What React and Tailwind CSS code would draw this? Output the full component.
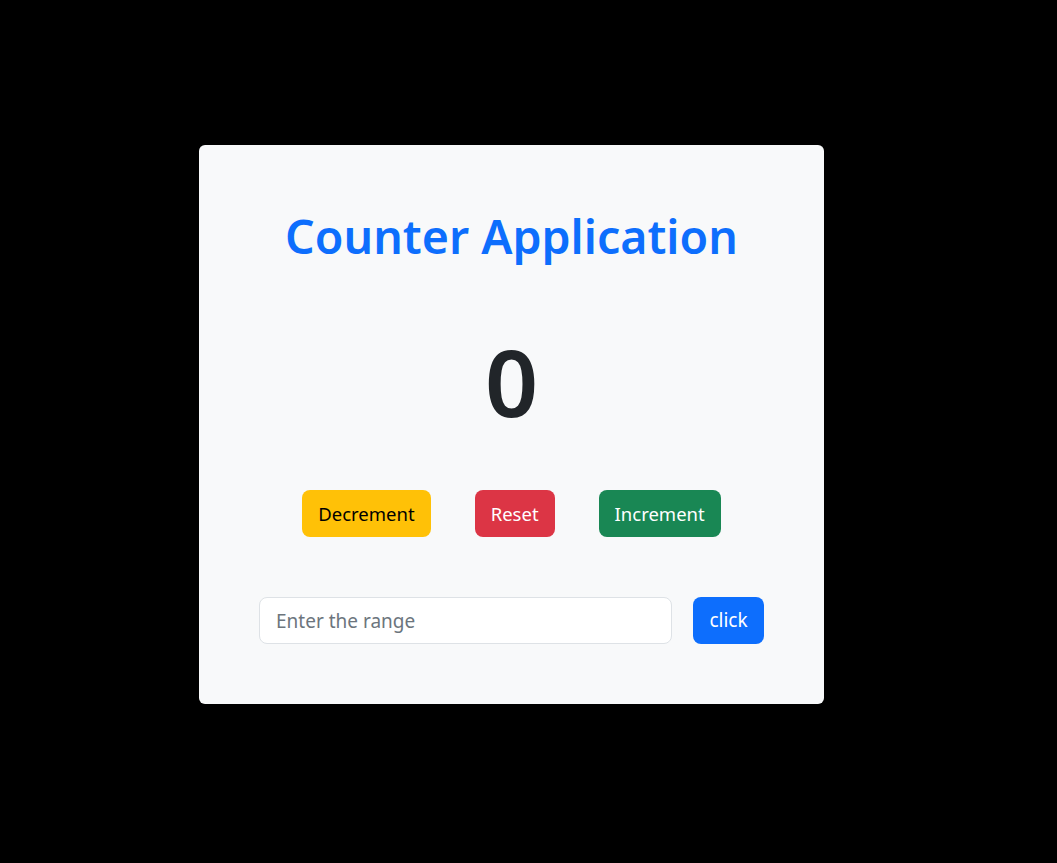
import React, { useState } from "react";

function App() {
  const [count, setCount] = useState(0);
  const [range, setRange] = useState("");

  const applyRange = () => {
    const n = parseInt(range, 10);
    if (!isNaN(n)) setCount(n);
  };

  return (
    <div
      className="min-h-screen bg-black pt-[145px] pl-[199px]"
      style={{ fontFamily: '"Noto Sans", "Open Sans", sans-serif' }}
    >
      <div className="w-[625px] h-[559px] bg-[#f8f9fa] rounded-md px-[60px] pt-[61px] flex flex-col items-center">
        <h1 className="h-[60px] flex items-center text-[46.5px] leading-none font-semibold text-[#0d6efd] whitespace-nowrap">
          Counter Application
        </h1>

        <div className="mt-[55px] h-[120px] flex items-center text-[93px] leading-none font-semibold text-[#212529]">
          {count}
        </div>

        <div className="mt-[49px] flex gap-[44px]">
          <button
            onClick={() => setCount(count - 1)}
            className="h-[47px] px-4 rounded-lg bg-[#ffc107] text-black text-[18.5px]"
          >
            Decrement
          </button>
          <button
            onClick={() => setCount(0)}
            className="h-[47px] px-4 rounded-lg bg-[#dc3545] text-white text-[18.5px]"
          >
            Reset
          </button>
          <button
            onClick={() => setCount(count + 1)}
            className="h-[47px] px-4 rounded-lg bg-[#198754] text-white text-[18.5px]"
          >
            Increment
          </button>
        </div>

        <div className="mt-[60px] w-full flex gap-[21px]">
          <input
            type="text"
            value={range}
            onChange={(e) => setRange(e.target.value)}
            placeholder="Enter the range"
            className="w-[413px] h-[47px] px-4 bg-white border border-[#dee2e6] rounded-lg text-[19px] text-[#212529] placeholder-[#6c757d] outline-none"
          />
          <button
            onClick={applyRange}
            className="w-[71px] h-[47px] rounded-lg bg-[#0d6efd] text-white text-[19px]"
          >
            click
          </button>
        </div>
      </div>
    </div>
  );
}

export default App;
